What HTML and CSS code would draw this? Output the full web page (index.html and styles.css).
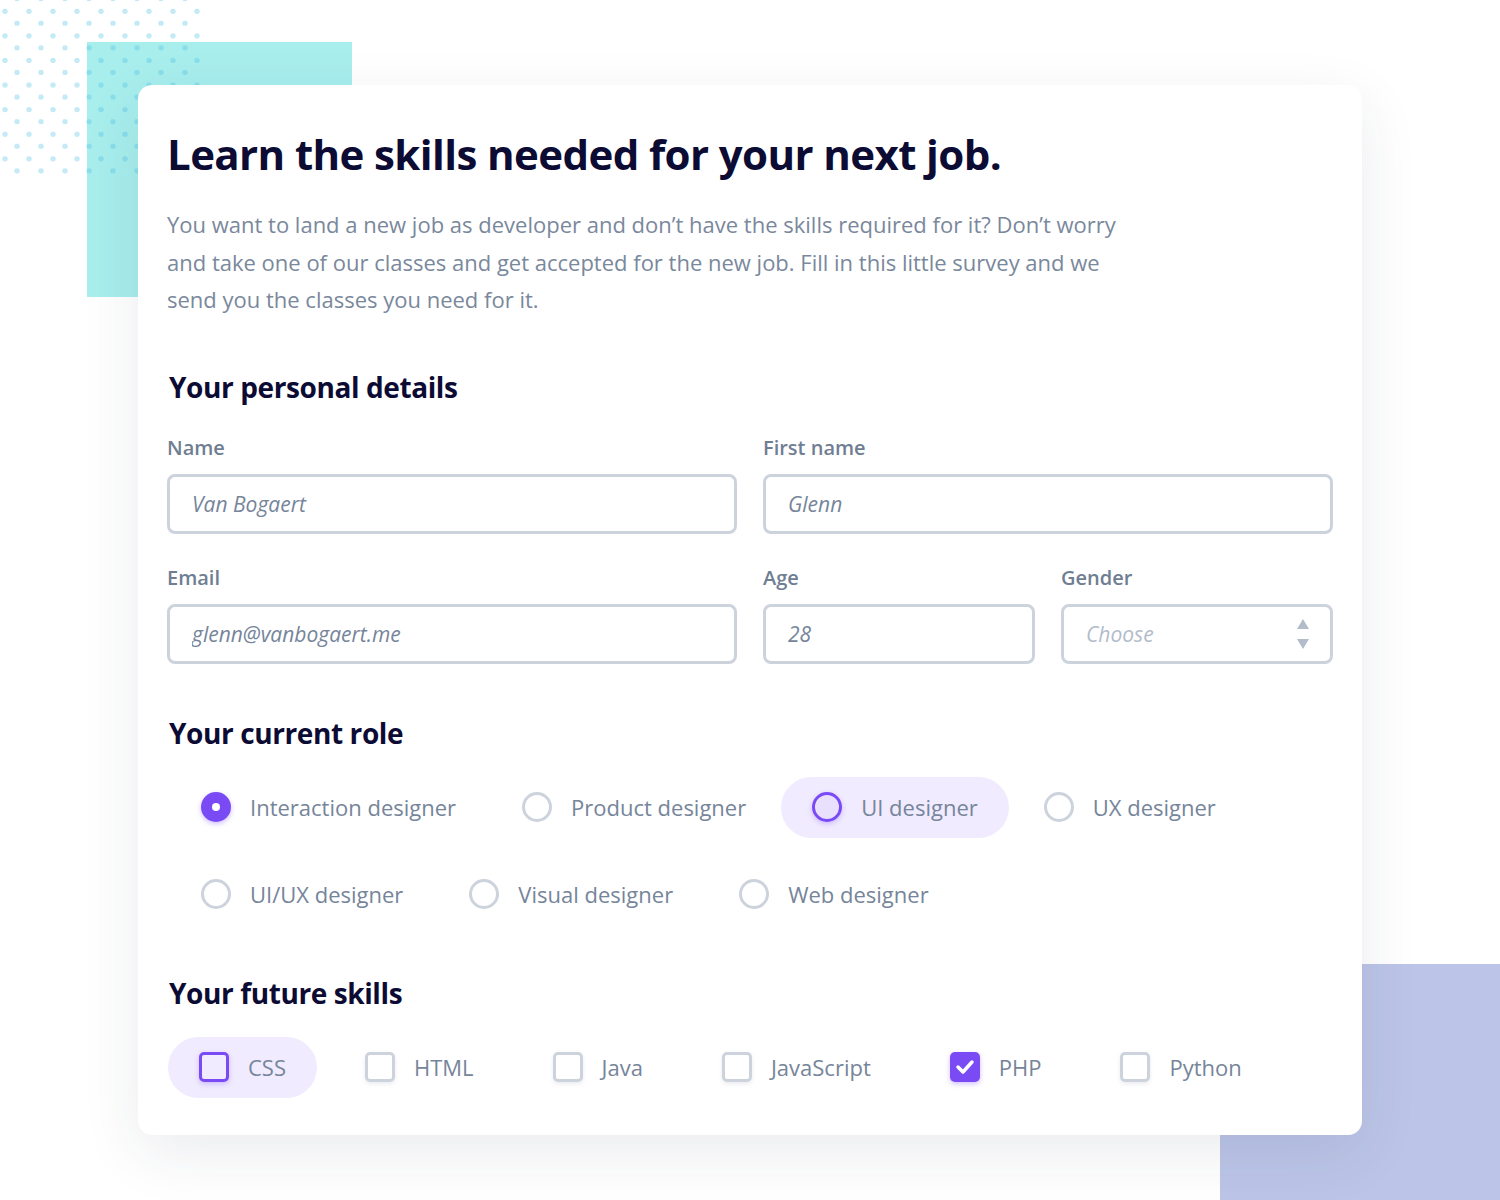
FILE: index.html
```html
<!DOCTYPE html>
<html lang="en">
<head>
    <meta charset="UTF-8">
    <meta name="viewport" content="width=device-width, initial-scale=1.0">
    <title>Skills survey</title>
    <link rel="stylesheet" href="styles.css">
</head>
<body>
    <div class="page">
        <div class="deco deco-teal"></div>
        <div class="deco deco-dots"></div>
        <div class="deco deco-lilac"></div>

        <form class="card">
            <h1>Learn the skills needed for your next job.</h1>
            <p class="intro">
                You want to land a new job as developer and don’t have the skills required for it? Don’t worry<br>
                and take one of our classes and get accepted for the new job. Fill in this little survey and we<br>
                send you the classes you need for it.
            </p>

            <h2>Your personal details</h2>
            <div class="fields">
                <label class="field span-2">
                    <span class="label">Name</span>
                    <input class="input" type="text" value="Van Bogaert">
                </label>
                <label class="field span-2">
                    <span class="label">First name</span>
                    <input class="input" type="text" value="Glenn">
                </label>
                <label class="field span-2">
                    <span class="label">Email</span>
                    <input class="input" type="email" value="glenn@vanbogaert.me">
                </label>
                <label class="field">
                    <span class="label">Age</span>
                    <input class="input" type="text" value="28">
                </label>
                <label class="field">
                    <span class="label">Gender</span>
                    <span class="select">
                        <span class="select-value">Choose</span>
                        <svg class="select-arrows" width="12" height="30" viewBox="0 0 12 30">
                            <path d="M6 0 L12 10 L0 10 Z" fill="#b3bccb"/>
                            <path d="M0 20 L12 20 L6 30 Z" fill="#b3bccb"/>
                        </svg>
                    </span>
                </label>
            </div>

            <h2>Your current role</h2>
            <div class="options roles">
                <div class="option-row">
                    <label class="option">
                        <span class="radio checked"></span>
                        <span class="option-text">Interaction designer</span>
                    </label>
                    <label class="option">
                        <span class="radio"></span>
                        <span class="option-text">Product designer</span>
                    </label>
                    <label class="option focused">
                        <span class="radio active"></span>
                        <span class="option-text">UI designer</span>
                    </label>
                    <label class="option">
                        <span class="radio"></span>
                        <span class="option-text">UX designer</span>
                    </label>
                </div>
                <div class="option-row">
                    <label class="option">
                        <span class="radio"></span>
                        <span class="option-text">UI/UX designer</span>
                    </label>
                    <label class="option">
                        <span class="radio"></span>
                        <span class="option-text">Visual designer</span>
                    </label>
                    <label class="option">
                        <span class="radio"></span>
                        <span class="option-text">Web designer</span>
                    </label>
                </div>
            </div>

            <h2>Your future skills</h2>
            <div class="options skills">
                <div class="option-row">
                    <label class="option focused">
                        <span class="check active"></span>
                        <span class="option-text">CSS</span>
                    </label>
                    <label class="option">
                        <span class="check"></span>
                        <span class="option-text">HTML</span>
                    </label>
                    <label class="option">
                        <span class="check"></span>
                        <span class="option-text">Java</span>
                    </label>
                    <label class="option">
                        <span class="check"></span>
                        <span class="option-text">JavaScript</span>
                    </label>
                    <label class="option">
                        <span class="check checked">
                            <svg width="20" height="16" viewBox="0 0 20 16">
                                <path d="M3 8 L8 13 L17 3" fill="none" stroke="#fff" stroke-width="3.5" stroke-linecap="round" stroke-linejoin="round"/>
                            </svg>
                        </span>
                        <span class="option-text">PHP</span>
                    </label>
                    <label class="option">
                        <span class="check"></span>
                        <span class="option-text">Python</span>
                    </label>
                </div>
            </div>
        </form>
    </div>
</body>
</html>
```

FILE: styles.css
```css
body {
    margin: 0;
    background-color: #fff;
    font-family: "Open Sans", "Noto Sans", sans-serif;
    color: #76859a;
}
.page {
    position: relative;
    width: 1500px;
    height: 1200px;
    overflow: hidden;
    padding: 85px 0 0 138px;
    box-sizing: border-box;
}
/* decorative shapes behind the card */
.deco {
    position: absolute;
}
.deco-teal {
    left: 87px;
    top: 42px;
    width: 265px;
    height: 255px;
    background-color: #a8eeed;
}
.deco-dots {
    left: 0;
    top: 0;
    width: 204px;
    height: 178px;
    background-image:
        radial-gradient(circle, rgba(70, 190, 225, 0.32) 2.4px, transparent 3px),
        radial-gradient(circle, rgba(70, 190, 225, 0.32) 2.4px, transparent 3px);
    background-size: 24px 24.6px;
    background-position: -7px -1px, 5px 11px;
}
.deco-lilac {
    left: 1220px;
    top: 964px;
    width: 280px;
    height: 236px;
    background-color: #bcc5e7;
}
.card {
    position: relative;
    width: 1224px;
    height: 1050px;
    box-sizing: border-box;
    padding: 34px 29px 0 29px;
    background-color: #fff;
    border-radius: 14px;
    box-shadow: 0 18px 60px rgba(30, 40, 80, 0.09);
}
h1 {
    margin: 0;
    font-size: 42px;
    line-height: 70px;
    font-weight: 700;
    color: #0c0b33;
    letter-spacing: -0.6px;
}
.intro {
    margin: 17px 0 0;
    font-size: 22px;
    line-height: 37.5px;
    color: #7a889c;
}
h2 {
    margin: 0;
    padding-left: 2px;
    font-size: 28px;
    line-height: 40px;
    font-weight: 700;
    color: #0c0b33;
    letter-spacing: -0.4px;
}
.intro + h2 {
    margin-top: 48px;
}
.fields {
    display: grid;
    grid-template-columns: repeat(4, minmax(0, 1fr));
    column-gap: 26px;
    row-gap: 31px;
    margin-top: 28px;
}
.field {
    display: flex;
    flex-direction: column;
    min-width: 0;
}
.span-2 {
    grid-column: span 2;
}
.label {
    font-size: 20px;
    line-height: 26px;
    font-weight: 600;
    color: #6f7e92;
    margin-bottom: 13px;
}
.input,
.select {
    width: 100%;
    height: 60px;
    box-sizing: border-box;
    border: 3px solid #cdd3dd;
    border-radius: 8px;
    padding: 0 22px;
    font-family: inherit;
    font-size: 21px;
    font-style: italic;
    color: #76859a;
    background-color: #fff;
    outline: none;
}
.select {
    display: flex;
    align-items: center;
    justify-content: space-between;
    padding-right: 21px;
}
.select-value {
    color: #b3bccb;
}
.fields + h2 {
    margin-top: 49px;
}
.options {
    display: flex;
    flex-direction: column;
    gap: 26px;
    margin-top: 24px;
}
.option-row {
    display: flex;
}
.roles .option-row {
    gap: 4px;
    padding-left: 3px;
}
.skills {
    margin-top: 24px;
}
.skills .option-row {
    gap: 17px;
    padding-left: 1px;
}
.roles + h2 {
    margin-top: 48px;
}
.option {
    display: flex;
    align-items: center;
    gap: 19px;
    height: 61px;
    padding: 0 31px;
    border-radius: 31px;
    font-size: 22px;
    color: #76859a;
}
.option.focused {
    background-color: #f0ebfe;
}
.radio {
    width: 30px;
    height: 30px;
    box-sizing: border-box;
    border: 3px solid #cdd3dd;
    border-radius: 50%;
    flex-shrink: 0;
    display: flex;
    align-items: center;
    justify-content: center;
}
.radio.checked {
    border: none;
    background-color: #7a4bf5;
    box-shadow: 0 2px 5px rgba(122, 75, 245, 0.35);
}
.radio.checked::after {
    content: "";
    width: 8px;
    height: 8px;
    border-radius: 50%;
    background-color: #fff;
}
.radio.active {
    border-color: #7a4bf5;
    background-color: #e8e0fd;
    box-shadow: 0 2px 5px rgba(122, 75, 245, 0.3);
}
.check {
    width: 30px;
    height: 30px;
    box-sizing: border-box;
    border: 3px solid #cdd3dd;
    border-radius: 5px;
    flex-shrink: 0;
    display: flex;
    align-items: center;
    justify-content: center;
    box-shadow: 0 2px 4px rgba(120, 130, 160, 0.15);
}
.check.active {
    border-color: #7a4bf5;
    box-shadow: 0 2px 5px rgba(122, 75, 245, 0.3);
}
.check.checked {
    border: none;
    background-color: #7a4bf5;
    box-shadow: 0 2px 5px rgba(122, 75, 245, 0.35);
}
```
